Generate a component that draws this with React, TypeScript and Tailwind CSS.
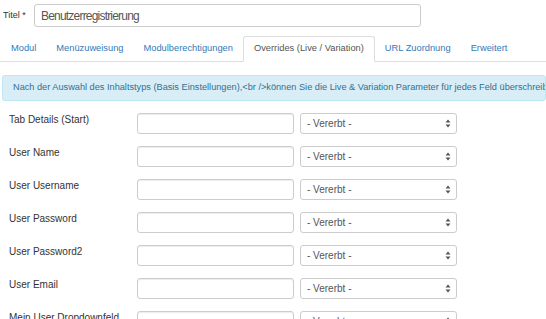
import React from 'react'

const tabs = [
  { name: 'Modul' },
  { name: 'Menüzuweisung' },
  { name: 'Modulberechtigungen' },
  { name: 'Overrides (Live / Variation)', active: true },
  { name: 'URL Zuordnung' },
  { name: 'Erweitert' },
]

const fields = [
  'Tab Details (Start)',
  'User Name',
  'User Username',
  'User Password',
  'User Password2',
  'User Email',
  'Mein User Dropdownfeld',
]

const SelectArrows = () => (
  <svg width="6" height="9" viewBox="0 0 6 9" className="shrink-0">
    <path d="M3 0.5 L5.5 3.5 H0.5 Z" fill="#555" />
    <path d="M3 8.5 L5.5 5.5 H0.5 Z" fill="#555" />
  </svg>
)

const FieldRow = ({ label }: { label: string }) => (
  <div className="flex items-start h-[33px]">
    <div className="w-[137px] pl-[9px] text-[10px] leading-[14px] text-[#333] whitespace-nowrap">{label}</div>
    <div className="w-[157px] h-[21px] border border-[#ccc] rounded-[3px] bg-white shadow-[inset_0_1px_1px_rgba(0,0,0,0.075)]" />
    <div className="ml-[6px] w-[157px] h-[21px] border border-[#ccc] rounded-[3px] bg-white flex items-center justify-between pl-[6px] pr-[5px] text-[10px] text-[#555]">
      <span>- Vererbt -</span>
      <SelectArrows />
    </div>
  </div>
)

export default function App() {
  return (
    <div className="w-[546px] h-[319px] overflow-hidden bg-white font-['Liberation_Sans',Arial,sans-serif]">
      {/* Title */}
      <div className="flex items-center h-[30px] pt-[1px]">
        <div className="w-[34px] pl-[3px] text-[9px] text-[#333]">Titel *</div>
        <div className="w-[387px] h-[23px] border border-[#ccc] rounded-[3px] flex items-center pl-[6px] text-[12px] tracking-[-0.8px] text-[#555]">
          Benutzerregistrierung
        </div>
      </div>

      {/* Tabs */}
      <div className="mt-[7px] flex items-end h-[25px] border-b border-[#ddd] pl-[1px]">
        {tabs.map((t) =>
          t.active ? (
            <div
              key={t.name}
              className="-mb-px h-[26px] px-[10px] flex items-center border border-[#ddd] border-b-white bg-white rounded-t-[3px] text-[9.3px] text-[#555]"
            >
              {t.name}
            </div>
          ) : (
            <div key={t.name} className="h-[25px] px-[10px] flex items-center text-[9.3px] text-[#337ab7]">
              {t.name}
            </div>
          )
        )}
      </div>

      {/* Info alert */}
      <div className="mt-[13px] ml-[2px] h-[26px] flex items-center pl-[10px] bg-[#d9edf7] border border-[#bce8f1] rounded-[3px] text-[9.2px] text-[#31708f] whitespace-nowrap overflow-hidden">
        Nach der Auswahl des Inhaltstyps (Basis Einstellungen),&lt;br /&gt;können Sie die Live &amp; Variation Parameter für jedes Feld überschreiben.
      </div>

      {/* Fields */}
      <div className="mt-[12px]">
        {fields.map((f) => (
          <FieldRow key={f} label={f} />
        ))}
      </div>
    </div>
  )
}
